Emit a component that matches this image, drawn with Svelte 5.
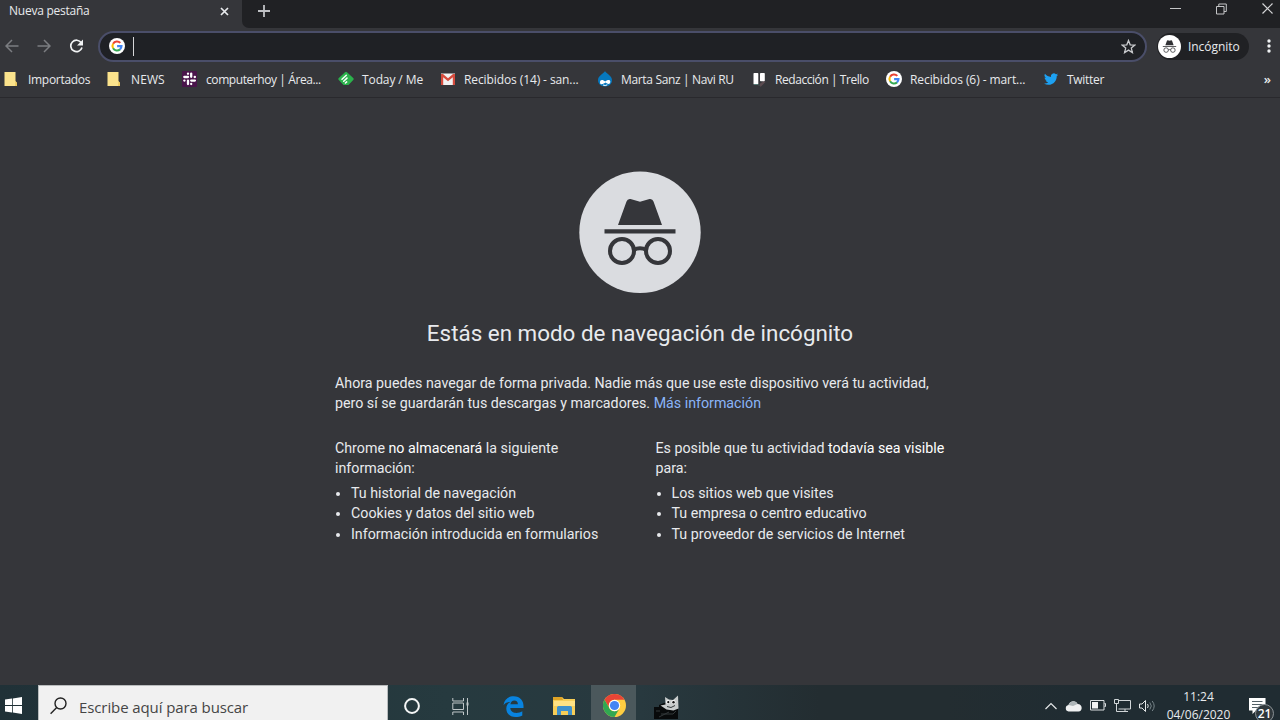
<script lang="ts">
  interface Bookmark {
    icon: string;
    label: string;
    width: number;
    tracking: number;
  }

  const bookmarks: Bookmark[] = [
    { icon: 'folder', label: 'Importados', width: 103, tracking: -0.3 },
    { icon: 'folder', label: 'NEWS', width: 75, tracking: 0.1 },
    { icon: 'slack', label: 'computerhoy | Área...', width: 156, tracking: -0.42 },
    { icon: 'feedly', label: 'Today / Me', width: 102, tracking: -0.1 },
    { icon: 'gmail', label: 'Recibidos (14) - san...', width: 157, tracking: -0.1 },
    { icon: 'drupal', label: 'Marta Sanz | Navi RU', width: 154, tracking: -0.34 },
    { icon: 'trello', label: 'Redacción | Trello', width: 135, tracking: -0.44 },
    { icon: 'google', label: 'Recibidos (6) - mart...', width: 157, tracking: -0.08 },
    { icon: 'twitter', label: 'Twitter', width: 65, tracking: -0.3 }
  ];

  const notStored = [
    'Tu historial de navegación',
    'Cookies y datos del sitio web',
    'Información introducida en formularios'
  ];

  const stillVisible = [
    'Los sitios web que visites',
    'Tu empresa o centro educativo',
    'Tu proveedor de servicios de Internet'
  ];

  let query = $state('');
</script>

{#snippet google()}
  <svg class="icon" viewBox="0 0 16 16">
    <circle cx="8" cy="8" r="8" fill="#fff" />
    <g fill="none" stroke-width="2.1">
      <path d="M4.1 5.7A4.5 4.5 0 0 1 11.3 4.9" stroke="#ea4335" />
      <path d="M4.1 10.3A4.5 4.5 0 0 1 4.1 5.7" stroke="#fbbc05" />
      <path d="M11 11.4A4.5 4.5 0 0 1 4.1 10.3" stroke="#34a853" />
      <path d="M8.1 8.1h4.4A4.5 4.5 0 0 1 11 11.4" stroke="#4285f4" />
    </g>
  </svg>
{/snippet}

{#snippet bookmarkIcon(name: string)}
  {#if name === 'google'}
    {@render google()}
  {:else}
    <svg class="icon" viewBox="0 0 16 16">
      {#if name === 'folder'}
        <path d="M.5 1h11v9l1.500 2v3H.5z" fill="#fbe38c" />
        <path d="M11.500 10l1.500 2v3h-2z" fill="#edc95d" />
      {:else if name === 'slack'}
        <rect width="15" height="16" rx="1" fill="#4a154b" />
        <g stroke="#fff" stroke-width="2.300" stroke-linecap="round">
          <path d="M6 2.600v.2M9.200 2.600v3.200M2.300 6h3.700M12.700 6h.2M2.300 9.600h.2M9.200 9.600h3.700M6 9.600v3.500M9.200 13v.1" />
        </g>
      {:else if name === 'feedly'}
        <path d="M7 1.2q1-1 2 0l6.200 5.900q1 1 0 2L10.500 14h-5L.8 9.100q-1-1 0-2z" fill="#2bb24c" />
        <path d="M4 8.300l4.300-4M5.700 10.200L9 7.100M7.400 12l1.300-1.100" stroke="#fff" stroke-width="1.500" stroke-linecap="round" />
      {:else if name === 'gmail'}
        <path d="M1 2.500h14v11.500H1z" fill="#f2f2f2" />
        <path d="M1 2.900h2l5 4.300 5-4.300h2V14h-2.200V6.300L8 10.300 3.200 6.300V14H1z" fill="#d54b3d" />
      {:else if name === 'drupal'}
        <path d="M8 0c1 2.600 7 4.500 7 9.100C15 13 12 15.500 8 15.500S1 13 1 9.100C1 4.500 7 2.600 8 0z" fill="#0678be" />
        <path d="M3 11.400c0-3.500 3.200-2.800 5.300-.8 2-2 5.200-2.200 5 .5-.3 2.800-3 1.900-4.700.5-1.500 1.200-5.600 3-5.600-.2z" fill="#fff" />
        <path d="M6 14q2.300 1.200 4.300-.2" stroke="#fff" fill="none" />
      {:else if name === 'trello'}
        <path d="M8.500 13l4-3 2 1-5 5z" fill="#5b4b50" />
        <rect x="2.500" y="2" width="4.800" height="11.500" rx=".7" fill="#fff" />
        <rect x="9" y="2" width="4.800" height="8.200" rx=".7" fill="#fff" />
        <path d="M3 13.500h4l1 1" stroke="#557b75" fill="none" />
      {:else}
        <path
          transform="translate(1 1) scale(.59)"
          d="M23.950 4.570a10 10 0 0 1-2.820.78 4.960 4.960 0 0 0 2.160-2.730c-.95.560-2 .96-3.130 1.190a4.920 4.920 0 0 0-8.380 4.480C7.690 8.100 4.070 6.130 1.640 3.160a4.920 4.920 0 0 0 1.520 6.570 4.900 4.900 0 0 1-2.230-.61v.06a4.920 4.920 0 0 0 3.950 4.830 5 5 0 0 1-2.210.08 4.940 4.940 0 0 0 4.600 3.420A9.870 9.870 0 0 1 0 19.540a14 14 0 0 0 7.550 2.210c9.140 0 14.300-7.720 14.010-14.640a10 10 0 0 0 2.390-2.540z"
          fill="#1da1f2"
        />
      {/if}
    </svg>
  {/if}
{/snippet}

{#snippet spy()}
  <path d="M39 54L47.500 30.500q1-3 4-2.500l9.500 2.700 9.500-2.700q3-.5 4 2.500L83 54z" />
  <path d="M25.500 58.300h71v4.200h-71z" />
  <g fill="none" stroke="currentColor" stroke-width="4">
    <circle cx="43" cy="80" r="12" />
    <circle cx="79" cy="80" r="12" />
    <path d="M54.500 79q6.500-3.500 13 0" />
  </g>
{/snippet}

<div class="screen">
  <header class="tab-strip">
    <div class="tab">
      <span>Nueva pestaña</span>
      <svg width="9" height="9" viewBox="0 0 9 9"><path d="M1 1l7 7M8 1L1 8" stroke="#e8eaed" stroke-width="1.700" /></svg>
    </div>
    <div class="new-tab">
      <svg width="12" height="12" viewBox="0 0 12 12"><path d="M6 0v12M0 6h12" stroke="#bfc1c5" stroke-width="1.800" /></svg>
    </div>
    <div class="window-controls">
      <svg width="11" height="12" viewBox="0 0 11 12"><path d="M0 5.500h11" stroke="#c4c5c7" /></svg>
      <svg width="11" height="12" viewBox="0 0 11 12"><path d="M.5 3.500h7.500v7.500H.5zM2.800 3.500v-2.500h7.500v7.500H8" fill="none" stroke="#c4c5c7" /></svg>
      <svg width="11" height="12" viewBox="0 0 11 12"><path d="M.5 .5l10 10M10.500 .5l-10 10" stroke="#d4d5d7" stroke-width="1.200" /></svg>
    </div>
  </header>

  <div class="toolbar">
    <div class="nav">
      <svg width="14" height="14" viewBox="0 0 14 14"><path d="M13.500 7H1M7 1L1 7l6 6" fill="none" stroke="#7b7d81" stroke-width="1.500" /></svg>
      <svg width="14" height="14" viewBox="0 0 14 14"><path d="M.5 7H13M7 1l6 6-6 6" fill="none" stroke="#7b7d81" stroke-width="1.500" /></svg>
      <svg width="15" height="14" viewBox="0 0 15 14"><path d="M12.300 3.800A5.700 5.700 0 1 0 13 8.500" fill="none" stroke="#f1f3f4" stroke-width="1.700" /><path d="M14 .5v6H8z" fill="#f1f3f4" /></svg>
    </div>
    <label class="omnibox">
      {@render google()}
      <span class="caret"></span>
      <input bind:value={query} aria-label="Buscar" />
      <svg width="15" height="15" viewBox="0 0 15 15"><path d="M7.500 1.500l1.700 4.300 4.600.3-3.500 3 1.100 4.500-3.900-2.500-3.900 2.500 1.100-4.500-3.500-3 4.600-.3z" fill="none" stroke="#c9cbce" stroke-width="1.300" /></svg>
    </label>
    <div class="profile">
      <svg width="23" height="23" viewBox="0 0 122 122">
        <circle cx="61" cy="61" r="61" fill="#fff" />
        <g class="hat">{@render spy()}</g>
      </svg>
      <span>Incógnito</span>
    </div>
    <svg class="menu" width="4" height="14" viewBox="0 0 4 14" fill="#f1f3f4"><circle cx="2" cy="2" r="1.700" /><circle cx="2" cy="7" r="1.700" /><circle cx="2" cy="12" r="1.700" /></svg>
  </div>

  <nav class="bookmarks">
    {#each bookmarks as bookmark}
      <div class="bookmark" style="width: {bookmark.width}px; letter-spacing: {bookmark.tracking}px">
        {@render bookmarkIcon(bookmark.icon)}
        <span>{bookmark.label}</span>
      </div>
    {/each}
    <span class="more">»</span>
  </nav>

  <main>
    <svg class="incognito" width="122" height="122" viewBox="0 0 122 122">
      <circle cx="61" cy="61.300" r="60.700" fill="#dadce0" />
      {@render spy()}
    </svg>
    <h1>Estás en modo de navegación de incógnito</h1>
    <div class="content">
      <p>
        Ahora puedes navegar de forma privada. Nadie más que use este dispositivo verá tu actividad,<br />
        pero sí se guardarán tus descargas y marcadores. <a href="#info">Más información</a>
      </p>
      <div class="columns">
        <section>
          Chrome <em>no almacenará</em> la siguiente<br />información:
          <ul>
            {#each notStored as item}
              <li>{item}</li>
            {/each}
          </ul>
        </section>
        <section>
          Es posible que tu actividad <em>todavía sea visible</em><br />para:
          <ul>
            {#each stillVisible as item}
              <li>{item}</li>
            {/each}
          </ul>
        </section>
      </div>
    </div>
  </main>

  <footer class="taskbar">
    <div class="start">
      <svg width="17" height="17" viewBox="0 0 17 17"><path d="M0 2.500l7-1v6.500H0zM7.800 1.400L17 0v8H7.800zM0 8.900h7v6.500l-7-1zM7.800 8.900H17V17l-9.200-1.400z" fill="#fff" /></svg>
    </div>
    <div class="search">
      <svg width="17" height="18" viewBox="0 0 17 18"><circle cx="10.500" cy="6.500" r="5.500" fill="none" stroke="#222" stroke-width="1.400" /><path d="M6.700 10.500L.6 16.700" stroke="#222" stroke-width="1.400" /></svg>
      <span>Escribe aquí para buscar</span>
    </div>
    <div class="apps">
      <div class="app">
        <svg width="16" height="16" viewBox="0 0 16 16"><circle cx="8" cy="8" r="6.900" fill="none" stroke="#f4f6f6" stroke-width="2" /></svg>
      </div>
      <div class="app">
        <svg width="17" height="17" viewBox="0 0 17 17" fill="none" stroke="#c0c7c9"><path d="M.8 0v3h10.700V0M.8 5h10.700v6.500H.8zM.8 17v-3h10.700v3M15.500 0v17" /><path d="M14.500 4.500h2v3h-2z" fill="#c0c7c9" stroke="none" /></svg>
      </div>
      <div class="app">
        <svg width="21" height="21" viewBox="0 0 21 21"><path d="M.5 9.200C1.400 3 5.700.2 10.700.2c6.500 0 9.800 4.800 9.800 9.500V12H7.300c.2 3.500 3 4.900 6 4.900 2.200 0 4.400-.7 6-1.700v4.300c-2 1-4.400 1.500-6.800 1.500C7 21 3.300 17.500 3.300 12.700c0-3.100 1.700-5.500 4.300-7C4.700 5.900 2.200 7 .5 9.200zM7.400 8.300h7.500c0-2.200-1.200-3.700-3.600-3.700-2.100 0-3.600 1.500-3.900 3.700z" fill="#0883df" /></svg>
      </div>
      <div class="app">
        <svg width="23" height="18" viewBox="0 0 23 18"><path d="M0 0h9l2 2h11v16H0z" fill="#f7ce57" /><path d="M0 0h9l1 3H0z" fill="#dfa426" /><path d="M1 4h21v5H1z" fill="#ffe284" /><path d="M4 10.500q0-1.500 1.500-1.500h12q1.500 0 1.500 1.500V18h-4v-4H8v4H4z" fill="#3f91cc" /></svg>
      </div>
      <div class="app active">
        <svg width="23" height="23" viewBox="0 0 24 24">
          <circle cx="12" cy="12" r="12" fill="#ffcd41" />
          <path d="M1.600 6A12 12 0 0 1 22.400 6H12a6 6 0 0 0-5.200 9z" fill="#e84436" />
          <path d="M1.600 6A12 12 0 0 0 12 24l5.200-9a6 6 0 0 1-10.400 0z" fill="#31a852" />
          <circle cx="12" cy="12" r="5.900" fill="#fff" />
          <circle cx="12" cy="12" r="4.800" fill="#4285f4" />
        </svg>
      </div>
      <div class="app gimp">
        <svg width="26" height="25" viewBox="0 0 26 25">
          <path d="M1 13h5v-2l5-2 14 2v14H1z" fill="#080a0b" />
          <path d="M12 3l4 2.500 4 .5 5-4.500.5 13-5 2-7-1-6-4 5-1z" fill="#c9cdcd" />
          <circle cx="15" cy="8" r="2" fill="#f7f7f7" /><circle cx="20.500" cy="8" r="2.100" fill="#f7f7f7" />
          <circle cx="15.300" cy="8.200" r="1.100" fill="#111" /><circle cx="20.500" cy="8.200" r="1.200" fill="#111" />
          <path d="M14 12.500q4 2.500 8-1M3 17h4M8 20h12l3-3M6 23l10-5" fill="none" stroke="#33383a" />
        </svg>
      </div>
    </div>
    <div class="tray">
      <svg width="12" height="8" viewBox="0 0 12 8"><path d="M.5 7L6 1.500 11.500 7" fill="none" stroke="#e3e6e7" stroke-width="1.200" /></svg>
      <svg width="17" height="12" viewBox="0 0 17 12"><path d="M3.500 11.500a3.300 3.300 0 0 1 0-6.500C5 .4 11 0 12.500 4c5.500 0 5.300 7.500 1 7.500z" fill="#f0f1f2" /><path d="M3.500 5C5 .4 11 0 12.500 4L8 6z" fill="#aeb6b9" /></svg>
      <svg width="16" height="11" viewBox="0 0 16 11"><path d="M.5.500h13.500v9.500H.5zM14.500 3.500h1v3h-1" fill="none" stroke="#d9dddf" /><path d="M2 2h6v6.500H2z" fill="#f2f3f4" /></svg>
      <svg width="17" height="14" viewBox="0 0 17 14"><path d="M5 1.500h11.500v8.500H4.500M7 12.500h7M11 10v2.500M.5.500h4v4h-4zM2.500 4.500v8H7" fill="none" stroke="#d1d6d8" /></svg>
      <svg width="16" height="14" viewBox="0 0 16 14"><path d="M.5 5h2.500l3.500-3.500v11L3 9H.5z" fill="none" stroke="#e3e6e7" /><path d="M8.500 5q1.500 2 0 4" fill="none" stroke="#dce0e1" /><path d="M10.800 3.500q3 3.500 0 7M13.200 2q4 5 0 10" fill="none" stroke="#78858a" /></svg>
    </div>
    <div class="clock">
      <span>11:24</span>
      <span>04/06/2020</span>
    </div>
    <div class="notices">
      <svg width="17" height="17" viewBox="0 0 17 17"><path d="M0 0h16.500v12.500H7L3.500 16v-3.500H0z" fill="#fff" /><path d="M3 3.500h10.500M3 6.500h10.500M3 9.500h6" stroke="#536067" /></svg>
      <span class="badge">21</span>
    </div>
  </footer>
</div>

<style>
  :global(body) {
    margin: 0;
    overflow: hidden;
  }

  .screen {
    width: 1280px;
    height: 720px;
    overflow: hidden;
    display: flex;
    flex-direction: column;
    background: #35363a;
    color: #e8eaed;
    font-family: 'Open Sans', 'Noto Sans', sans-serif;
    font-size: 12px;
    white-space: nowrap;
  }

  svg {
    display: block;
    flex: none;
  }

  .icon {
    width: 16px;
    height: 16px;
  }

  .tab-strip {
    height: 28px;
    flex: none;
    display: flex;
  }

  .tab {
    box-sizing: border-box;
    width: 242px;
    height: 28px;
    padding: 0 13px 6px 9px;
    display: flex;
    align-items: center;
    justify-content: space-between;
    letter-spacing: -0.25px;
  }

  .tab span {
    margin-top: -1px;
  }

  .new-tab {
    box-sizing: border-box;
    width: 50px;
    height: 28px;
    padding: 5px 0 0 16px;
    background: #202124;
    border-bottom-left-radius: 7px;
  }

  .window-controls {
    flex: 1;
    display: flex;
    justify-content: flex-end;
    gap: 35px;
    padding: 3px 7px 0 0;
    background: #202124;
  }

  .toolbar {
    height: 36px;
    flex: none;
    display: flex;
    align-items: center;
  }

  .nav {
    width: 98px;
    display: flex;
    align-items: center;
    gap: 18px;
    padding-left: 5px;
    box-sizing: border-box;
  }

  .omnibox {
    box-sizing: border-box;
    width: 1049px;
    height: 31px;
    border: 2px solid #4a4e69;
    border-radius: 16px;
    background: #1f2125;
    display: flex;
    align-items: center;
    padding: 0 9px;
  }

  .caret {
    width: 1px;
    height: 19px;
    background: #d5d6d8;
    margin-left: 8px;
  }

  input {
    flex: 1;
    min-width: 0;
    border: 0;
    outline: 0;
    background: transparent;
    color: inherit;
    font: inherit;
    caret-color: transparent;
  }

  .profile {
    width: 92px;
    height: 27px;
    margin-left: 10px;
    display: flex;
    align-items: center;
    gap: 7px;
    border-radius: 14px;
    background: #202124;
    letter-spacing: -0.05px;
  }

  .profile svg {
    margin-left: 1px;
  }

  .hat {
    color: #303134;
    fill: currentColor;
  }

  .menu {
    margin-left: 18px;
  }

  .bookmarks {
    box-sizing: border-box;
    height: 34px;
    flex: none;
    display: flex;
    align-items: center;
    padding: 0 9px 3px 4px;
    border-bottom: 1px solid #29292d;
  }

  .bookmark {
    display: flex;
    align-items: center;
    gap: 8px;
    flex: none;
  }

  .more {
    margin-left: auto;
    font-size: 13px;
    font-weight: 600;
  }

  main {
    height: 587px;
    flex: none;
    box-sizing: border-box;
    padding-top: 73px;
    font-family: Roboto, sans-serif;
    font-size: 14.24px;
    line-height: 20.4px;
  }

  .incognito {
    margin: 0 auto;
    color: #35363a;
    fill: currentColor;
  }

  h1 {
    margin: 24px 0 0;
    text-align: center;
    font-size: 22.4px;
    font-weight: 400;
    line-height: 32px;
  }

  .content {
    width: 610px;
    margin: 24px auto 0;
  }

  p {
    margin: 0;
  }

  a {
    color: #8ab4f8;
    text-decoration: none;
  }

  em {
    font-style: normal;
    color: #fff;
  }

  .columns {
    display: grid;
    grid-template-columns: 290px 290px;
    column-gap: 30.5px;
    margin-top: 24.2px;
  }

  ul {
    margin: 4px 0 0;
    padding-left: 16px;
  }

  .taskbar {
    height: 35px;
    flex: none;
    display: flex;
    background: linear-gradient(90deg, #203137 0, #263a3f 35%, #28393f 50%, #232d31 64%, #232d31 74%, #202c32 84%, #202c32 100%);
  }

  .start {
    width: 38px;
    flex: none;
    padding: 12px 0 0 5px;
    box-sizing: border-box;
  }

  .search {
    width: 350px;
    flex: none;
    box-sizing: border-box;
    display: flex;
    gap: 12px;
    background: #f1f1f1;
    border: 1px solid #b9bcbd;
    border-bottom: 0;
    padding: 11px 0 0 11px;
    color: #454545;
    font-size: 15px;
    line-height: 20px;
    letter-spacing: -0.1px;
  }

  .apps {
    display: flex;
    height: 35px;
  }

  .app {
    width: 48px;
    height: 42px;
    display: flex;
    align-items: center;
    justify-content: center;
  }

  .app:nth-child(3) {
    width: 58px;
  }

  .app:nth-child(4) {
    width: 44px;
    margin-right: 5px;
  }

  .app.active {
    box-sizing: border-box;
    width: 45px;
    height: 35px;
    margin-right: 5px;
    background: #4b585c;
    align-items: flex-start;
    padding: 9px 0 0 2px;
  }

  .app.gimp {
    width: 50px;
  }

  .tray {
    display: flex;
    align-items: center;
    gap: 8px;
    height: 41px;
    margin-left: auto;
  }

  .clock {
    width: 87px;
    display: flex;
    flex-direction: column;
    align-items: center;
    line-height: 18px;
    padding-top: 3px;
  }

  .notices {
    width: 38px;
    padding: 13px 0 0 7px;
    box-sizing: border-box;
    position: relative;
  }

  .badge {
    position: absolute;
    left: 13px;
    top: 19px;
    width: 17px;
    height: 17px;
    border: 1px solid #8a9195;
    border-radius: 50%;
    background: #30383c;
    color: #fff;
    font-size: 12px;
    font-weight: 600;
    line-height: 17px;
    text-align: center;
  }
</style>
